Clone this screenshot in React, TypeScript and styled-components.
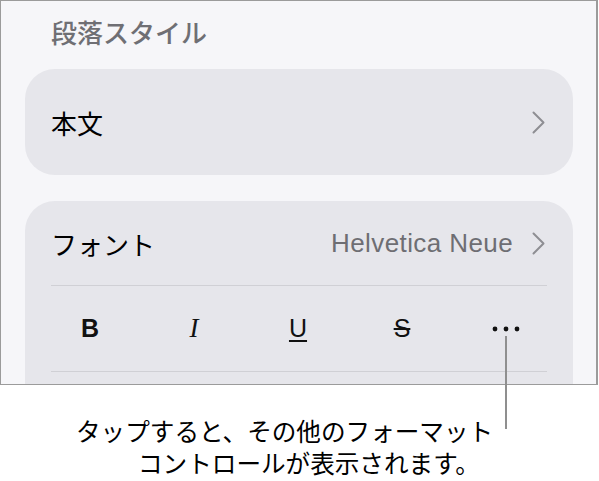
import React from 'react';
import styled, { createGlobalStyle } from 'styled-components';

const GlobalStyle = createGlobalStyle`
  html, body {
    margin: 0;
    padding: 0;
    background: #ffffff;
  }
  body {
    font-family: "Noto Sans CJK JP", "Noto Sans", sans-serif;
    -webkit-font-smoothing: antialiased;
  }
`;

const Page = styled.div`
  position: relative;
  width: 599px;
  height: 481px;
  overflow: hidden;
`;

const Panel = styled.div`
  box-sizing: border-box;
  width: 598px;
  height: 385px;
  overflow: hidden;
  background: #f6f6f9;
  border: 1px solid #9b9b9b;
  border-right-width: 2px;
  padding: 0 23px 0 24px;
`;

const Heading = styled.div`
  padding: 18px 0 24px 26px;
  font-size: 26px;
  line-height: 26px;
  font-weight: 500;
  color: #6f6f74;
`;

// the second card runs past the panel's bottom edge, so it gets extra room below
const Card = styled.div<{ $gap?: number; $tail?: number }>`
  background: #e6e6eb;
  border-radius: 30px;
  margin-bottom: ${({ $gap }) => $gap ?? 0}px;
  padding-bottom: ${({ $tail }) => $tail ?? 0}px;
`;

const Row = styled.div<{ $height: number }>`
  display: flex;
  align-items: center;
  justify-content: space-between;
  height: ${({ $height }) => $height}px;
  padding: 0 28px 0 26px;
`;

const Label = styled.span`
  font-size: 26px;
  color: #000000;
`;

const Value = styled.span`
  display: flex;
  align-items: center;
  gap: 19px;
  font-family: "Liberation Sans", Arial, sans-serif;
  font-size: 26px;
  letter-spacing: 0.4px;
  color: #6e6e73;
`;

const Divider = styled.div`
  height: 1px;
  margin: 0 26px;
  background: #d0d0d5;
`;

const FormatRow = styled.div`
  display: grid;
  grid-template-columns: repeat(5, 104px);
  height: 85px;
  padding: 0 15px 0 13px;
`;

const FormatButton = styled.div<{ $serif?: boolean; $bold?: boolean; $line?: string }>`
  display: flex;
  align-items: center;
  justify-content: center;
  font-family: ${({ $serif }) =>
    $serif ? '"Liberation Serif", "Times New Roman", serif' : '"Liberation Sans", Arial, sans-serif'};
  font-style: ${({ $serif }) => ($serif ? 'italic' : 'normal')};
  font-weight: ${({ $bold }) => ($bold ? 700 : 400)};
  font-size: ${({ $serif }) => ($serif ? 27 : 25)}px;
  color: #111111;
  text-decoration: ${({ $line }) => $line ?? 'none'};
  text-decoration-thickness: 1.5px;
  text-underline-offset: 3px;
`;

const Callout = styled.div`
  position: absolute;
  left: 505px;
  top: 336px;
  width: 2px;
  height: 93px;
  background: #8f8f8f;
`;

const Caption = styled.div`
  padding-top: 29px;
  font-size: 24.6px;
  line-height: 32px;
  color: #000000;
`;

const CaptionLine = styled.div<{ $indent: number }>`
  padding-left: ${({ $indent }) => $indent}px;
  white-space: nowrap;
`;

const Chevron = () => (
  <svg width="13" height="23" viewBox="0 0 13 23" fill="none">
    <polyline
      points="1.5,1.5 11.5,11.5 1.5,21.5"
      stroke="#8e8e93"
      strokeWidth="2"
      strokeLinecap="round"
      strokeLinejoin="round"
    />
  </svg>
);

const MoreDots = () => (
  <svg width="28" height="6" viewBox="0 0 28 6">
    <circle cx="3" cy="3" r="2.4" fill="#111" />
    <circle cx="14" cy="3" r="2.4" fill="#111" />
    <circle cx="25" cy="3" r="2.4" fill="#111" />
  </svg>
);

const App = () => (
  <>
    <GlobalStyle />
    <Page>
      <Panel>
        <Heading>段落スタイル</Heading>
        <Card $gap={26}>
          <Row $height={106}>
            <Label>本文</Label>
            <Chevron />
          </Row>
        </Card>
        <Card $tail={60}>
          <Row $height={84}>
            <Label>フォント</Label>
            <Value>
              Helvetica Neue
              <Chevron />
            </Value>
          </Row>
          <Divider />
          <FormatRow>
            <FormatButton $bold>B</FormatButton>
            <FormatButton $serif>I</FormatButton>
            <FormatButton $line="underline">U</FormatButton>
            <FormatButton $line="line-through">S</FormatButton>
            <FormatButton>
              <MoreDots />
            </FormatButton>
          </FormatRow>
          <Divider />
        </Card>
      </Panel>
      <Caption>
        <CaptionLine $indent={76}>タップすると、その他のフォーマット</CaptionLine>
        <CaptionLine $indent={138}>コントロールが表示されます。</CaptionLine>
      </Caption>
      <Callout />
    </Page>
  </>
);

export default App;
